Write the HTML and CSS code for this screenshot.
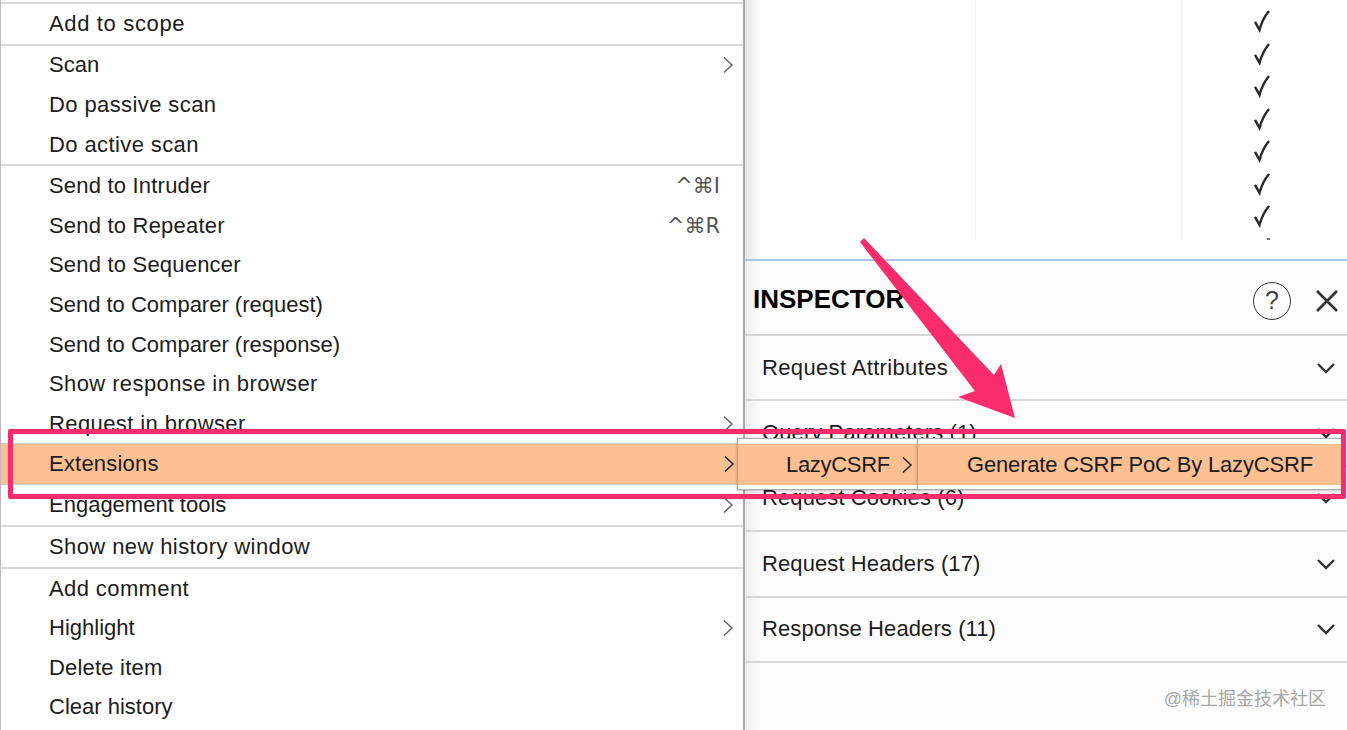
FILE: index.html
```html
<!DOCTYPE html>
<html lang="en">
<head>
  <meta charset="UTF-8">
  <title>LazyCSRF context menu</title>
  <link rel="stylesheet" href="styles.css">
</head>
<body>
  <svg width="0" height="0" class="defs">
    <symbol id="chev-right" viewBox="0 0 12 18"><path d="M2 1.5 L10 9 L2 16.5" fill="none" stroke="currentColor" stroke-width="1.5"/></symbol>
    <symbol id="chev-down" viewBox="0 0 20 12"><path d="M2 2 L10 10 L18 2" fill="none" stroke="currentColor" stroke-width="2.4"/></symbol>
    <symbol id="check" viewBox="0 0 18 22"><path d="M2 12 L6.5 20 C8 14 11 7 16 1" fill="none" stroke="currentColor" stroke-width="2.4"/></symbol>
  </svg>

  <div class="page">
    <div class="menu">
      <div class="group first">
        <div class="item widest">Add to scope</div>
      </div>
      <div class="group">
        <div class="item flush">Scan <svg class="chev"><use href="#chev-right"/></svg></div>
        <div class="item wide">Do passive scan</div>
        <div class="item wide">Do active scan</div>
      </div>
      <div class="group">
        <div class="item">Send to Intruder <span class="keys">^⌘I</span></div>
        <div class="item">Send to Repeater <span class="keys">^⌘R</span></div>
        <div class="item">Send to Sequencer</div>
        <div class="item flush">Send to Comparer (request)</div>
        <div class="item flush">Send to Comparer (response)</div>
        <div class="item wide">Show response in browser</div>
        <div class="item wide">Request in browser <svg class="chev"><use href="#chev-right"/></svg></div>
        <div class="item active">Extensions <svg class="chev dark"><use href="#chev-right"/></svg></div>
        <div class="item flush">Engagement tools <svg class="chev"><use href="#chev-right"/></svg></div>
      </div>
      <div class="group">
        <div class="item wide">Show new history window</div>
      </div>
      <div class="group">
        <div class="item wide">Add comment</div>
        <div class="item flush">Highlight <svg class="chev"><use href="#chev-right"/></svg></div>
        <div class="item">Delete item</div>
        <div class="item flush">Clear history</div>
      </div>
    </div>

    <div class="side">
      <div class="table">
        <div class="col col-a"></div>
        <div class="col col-b"></div>
        <div class="col col-c">
          <svg class="check"><use href="#check"/></svg>
          <svg class="check"><use href="#check"/></svg>
          <svg class="check"><use href="#check"/></svg>
          <svg class="check"><use href="#check"/></svg>
          <svg class="check"><use href="#check"/></svg>
          <svg class="check"><use href="#check"/></svg>
          <svg class="check"><use href="#check"/></svg>
          <span class="cut-dot"></span>
        </div>
      </div>
      <div class="inspector">
        <div class="insp-head">
          <h2>INSPECTOR</h2>
          <span class="help">?</span>
          <svg class="close" viewBox="0 0 24 24"><path d="M2 2 L22 22 M22 2 L2 22" fill="none" stroke="currentColor" stroke-width="2.6"/></svg>
        </div>
        <div class="insp-row first-row">Request Attributes <svg class="down"><use href="#chev-down"/></svg></div>
        <div class="insp-row">Query Parameters (1) <svg class="down"><use href="#chev-down"/></svg></div>
        <div class="insp-row">Request Cookies (6) <svg class="down"><use href="#chev-down"/></svg></div>
        <div class="insp-row">Request Headers (17) <svg class="down"><use href="#chev-down"/></svg></div>
        <div class="insp-row">Response Headers (11) <svg class="down"><use href="#chev-down"/></svg></div>
      </div>
    </div>
  </div>

  <!-- things lying over the page -->
  <div class="submenu sub-a"><div class="sub-item">LazyCSRF <svg class="chev dark"><use href="#chev-right"/></svg></div></div>
  <div class="submenu sub-b"><div class="sub-item">Generate CSRF PoC By LazyCSRF</div></div>
  <div class="callout"></div>
  <svg class="arrow" viewBox="0 0 1347 730"><polygon points="860,242 864,238 994,375 1001,364 1015,418 958,397 975,391"/></svg>
  <div class="watermark">@稀土掘金技术社区</div>
</body>
</html>
```

FILE: styles.css
```css
html, body {
  margin: 0;
  height: 730px;
  overflow: hidden;
  background: #fff;
}

body {
  font-family: "Liberation Sans", Arial, sans-serif;
  font-size: 22px;
  color: #1c1c1c;
}

.defs { position: absolute; }

.page {
  display: flex;
  height: 730px;
}

/* left context menu */
.menu {
  width: 745px;
  flex: none;
  padding-top: 2px;
  box-sizing: border-box;
  height: 730px;
  overflow: hidden;
  background: #fff;
  border-left: 1px solid #bbb;
  border-right: 2px solid #a9a9a9;
}

.group { border-top: 2px solid #d8d8d8; }

.item {
  height: 39.6px;
  padding: 0 9px 0 48px;
  display: flex;
  align-items: center;
  justify-content: space-between;
  letter-spacing: 0.2px;
}
.item.wide { letter-spacing: 0.4px; }
.item.widest { letter-spacing: 0.65px; }
.item.flush { letter-spacing: 0; }

.item.active {
  margin: -1px -1px 1px;
  padding-left: 49px;
  background: #fdc092;
  border-top: 1px solid #ccc;
  border-bottom: 1px solid #ccc;
  height: 40px;
}

.chev {
  width: 12px;
  height: 18px;
  color: #666;
  flex: none;
}
.chev.dark { color: #222; }

.keys {
  color: #555;
  margin-right: 14px;
  font-family: "DejaVu Sans", "Liberation Sans", sans-serif;
  font-size: 21px;
  letter-spacing: 0;
}

/* right side */
.side {
  flex: 1;
  display: flex;
  flex-direction: column;
  background: linear-gradient(to right, #e4e4e4, #fff 16px);
}

.table {
  height: 240px;
  display: flex;
  flex: none;
}
.col-a { width: 230px; border-right: 1px solid #f2f2f2; }
.col-b { width: 205px; border-right: 1px solid #f2f2f2; }
.col-c {
  padding: 9px 0 0 71px;
  display: flex;
  flex-direction: column;
  gap: 8.7px;
}

.check {
  width: 18px;
  height: 24px;
  color: #2a2a2a;
  display: block;
}

.cut-dot {
  width: 3px;
  height: 2px;
  margin: 1px 0 0 14px;
  background: #777;
}

.inspector {
  margin-top: 19px;
  border-top: 2px solid #a9c5e6;
  background: linear-gradient(to right, #ececec, #fcfcfc 14px);
  flex: 1;
}

.insp-head {
  height: 67px;
  padding: 6px 8px 0;
  display: flex;
  align-items: center;
  border-bottom: 2px solid #d4d4d4;
}
.insp-head h2 {
  margin: 0 auto 0 0;
  font-size: 26px;
  line-height: 1;
  color: #000;
  position: relative;
  top: -2px;
}

.help {
  width: 38px;
  height: 38px;
  border: 1.5px solid #333;
  border-radius: 50%;
  box-sizing: border-box;
  display: flex;
  align-items: center;
  justify-content: center;
  font-size: 25px;
  color: #444;
}

.close {
  width: 24px;
  height: 24px;
  margin-left: 24px;
  color: #333;
}

.insp-row {
  height: 63.4px;
  padding: 0 11px 0 17px;
  display: flex;
  align-items: center;
  justify-content: space-between;
  border-bottom: 2px solid #d8d8d8;
  letter-spacing: 0.1px;
}
.insp-row.first-row { letter-spacing: 0.35px; }

.down {
  width: 20px;
  height: 12px;
  color: #333;
}

/* submenus, callout, arrow */
.submenu {
  position: absolute;
  top: 438px;
  height: 52px;
  box-sizing: border-box;
  padding: 5px 0;
  background: #fff;
  border: 1px solid #aaa;
  box-shadow: 0 1px 3px rgba(0, 0, 0, 0.25);
}
.sub-item {
  height: 41px;
  background: #fdc092;
  display: flex;
  align-items: center;
}
.sub-a { left: 737px; width: 181px; }
.sub-a .sub-item { padding-left: 48px; gap: 11px; letter-spacing: -0.3px; }
.sub-b { left: 917px; width: 425px; }
.sub-b .sub-item { padding-left: 49px; letter-spacing: -0.17px; }

.callout {
  position: absolute;
  left: 8px;
  top: 429px;
  width: 1338px;
  height: 70px;
  box-sizing: border-box;
  border: 5px solid #fb2c6b;
  border-radius: 2px;
}

.arrow {
  position: absolute;
  left: 0;
  top: 0;
  width: 1347px;
  height: 730px;
  fill: #fb2c6b;
}

.watermark {
  position: absolute;
  right: 21px;
  top: 684px;
  font-family: "Liberation Sans", "Noto Sans CJK SC", sans-serif;
  font-size: 18px;
  color: #a8a8a8;
}
```
